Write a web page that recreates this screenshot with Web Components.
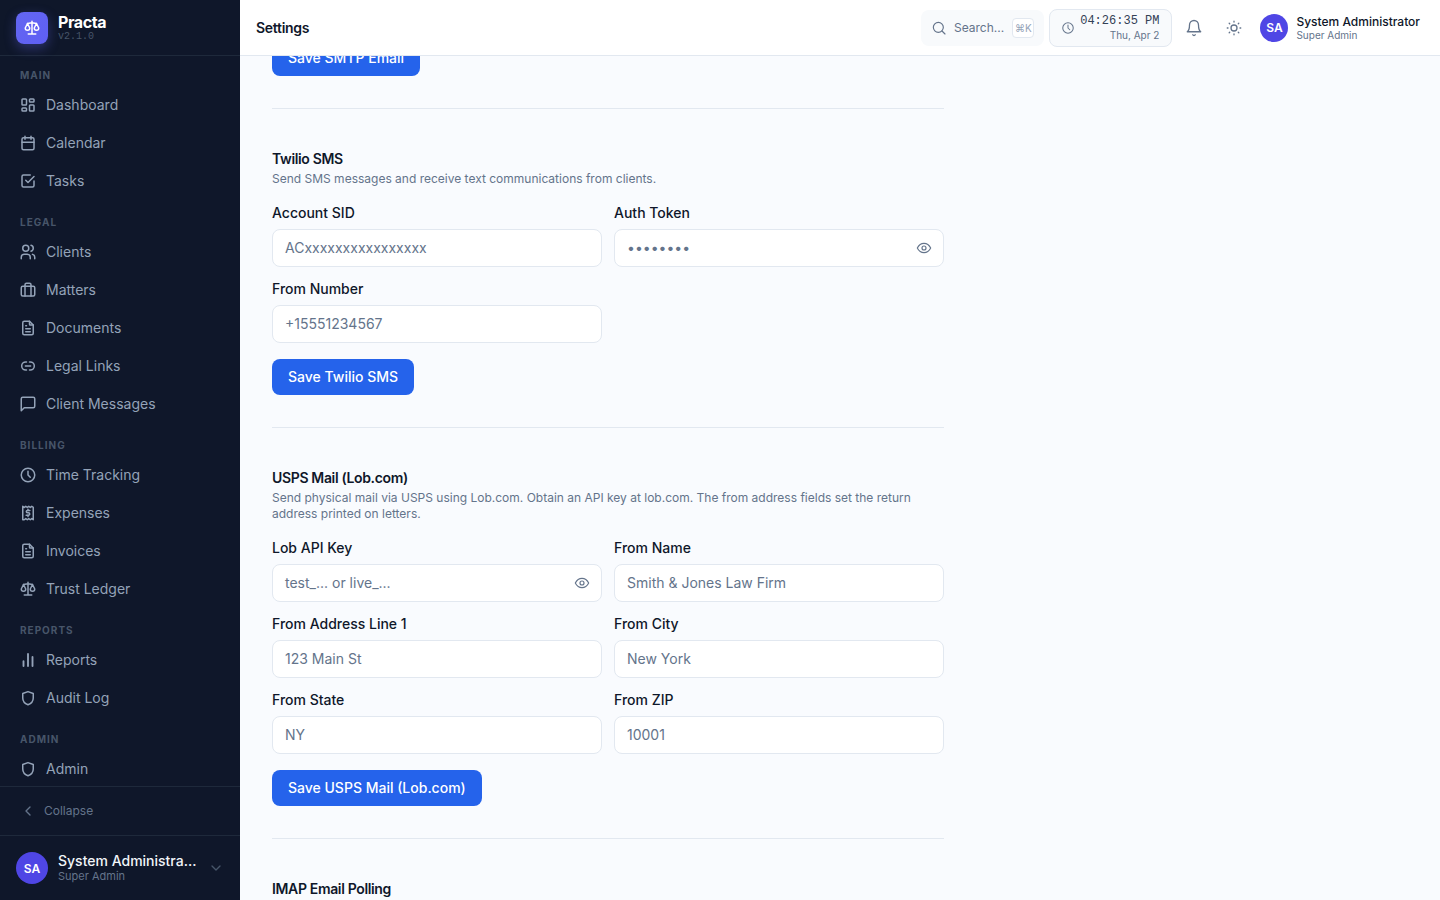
<!DOCTYPE html>
<html lang="en">
<head>
<meta charset="UTF-8" />
<title>Practa - Settings</title>
<style>
  html, body { margin: 0; height: 100%; overflow: hidden; }
  body { font-family: Inter, "Liberation Sans", sans-serif; background: #f8fafc; }
</style>
</head>
<body>

<template id="shell-tpl">
  <style>
    :host { display: flex; height: 100vh; width: 100%; }
    .col { flex: 1; min-width: 0; display: flex; flex-direction: column; }
    main { flex: 1; min-height: 0; overflow: hidden; background: #f9fbfe; padding-left: 32px; }
    .page { width: 672px; margin-top: -16px; }
  </style>
  <slot name="side"></slot>
  <div class="col">
    <slot name="top"></slot>
    <main><div class="page"><slot></slot></div></main>
  </div>
</template>

<template id="sidebar-tpl">
  <style>
    :host { display: flex; flex-direction: column; width: 240px; flex: none; height: 100vh; background: #0f172a; color: #94a3b8; }
    .brand { height: 55px; flex: none; display: flex; align-items: center; gap: 10px; padding: 0 16px; border-bottom: 1px solid #1e293b; }
    .logo { width: 32px; height: 32px; border-radius: 8px; background: linear-gradient(135deg, #6366f1, #5f5ff4); box-shadow: 0 4px 12px rgba(99,102,241,.35); display: flex; align-items: center; justify-content: center; color: #fff; }
    .name { color: #fff; font-size: 16px; font-weight: 700; line-height: 18px; letter-spacing: -0.4px; }
    .ver { color: #475569; font: 10px/10px "Liberation Mono", monospace; margin-top: 1px; }
    nav { flex: 1; min-height: 0; overflow: hidden; padding-top: 11px; display: flex; flex-direction: column; gap: 14px; }
    .collapse { height: 47px; padding-bottom: 1px; flex: none; display: flex; align-items: center; gap: 8px; padding-left: 20px; border-top: 1px solid #1e293b; font-size: 12px; color: #64748b; position: relative; z-index: 1; background: #0f172a; }
    .user { height: 64px; flex: none; display: flex; align-items: center; gap: 10px; padding: 0 16px; border-top: 1px solid #1e293b; }
    .av { width: 32px; height: 32px; border-radius: 50%; background: #4f46e5; color: #fff; font-size: 12px; font-weight: 600; display: flex; align-items: center; justify-content: center; flex: none; }
    .who { flex: 1; min-width: 0; padding-bottom: 2px; }
    .n { color: #f1f5f9; font-size: 14px; font-weight: 500; line-height: 17px; white-space: nowrap; overflow: hidden; text-overflow: ellipsis; }
    .r { color: #64748b; font-size: 11px; line-height: 14px; }
  </style>
  <div class="brand">
    <div class="logo"><app-icon name="scale" size="18" stroke="2"></app-icon></div>
    <div><div class="name">Practa</div><div class="ver">v2.1.0</div></div>
  </div>
  <nav><slot></slot></nav>
  <div class="collapse"><app-icon name="chev-left" size="16" stroke="2"></app-icon><span>Collapse</span></div>
  <div class="user">
    <div class="av">SA</div>
    <div class="who"><div class="n">System Administrator</div><div class="r">Super Admin</div></div>
    <app-icon name="chev-down" size="16" stroke="2" style="color:#475569"></app-icon>
  </div>
</template>

<template id="navsec-tpl">
  <style>
    :host { display: block; }
    .l { height: 16px; margin-bottom: 3px; padding-left: 20px; font-size: 10px; line-height: 16px; font-weight: 700; letter-spacing: 1px; color: #475569; text-transform: uppercase; }
  </style>
  <div class="l"></div>
  <slot></slot>
</template>

<template id="navitem-tpl">
  <style>
    :host { display: flex; align-items: center; box-sizing: border-box; height: 38px; padding: 0 0 1px 19px; gap: 9px; font-size: 14px; color: #94a3b8; }
  </style>
  <app-icon size="18" stroke="2"></app-icon><slot></slot>
</template>

<template id="topbar-tpl">
  <style>
    :host { display: flex; align-items: center; height: 55px; flex: none; background: #fff; border-bottom: 1px solid #e2e8f0; padding: 0 20px 0 16px; position: relative; z-index: 2; }
    h1 { margin: 0; font-size: 14px; font-weight: 600; color: #0f172a; flex: 1; letter-spacing: -0.3px; }
    .search { width: 123px; height: 36px; box-sizing: border-box; border-radius: 8px; background: #f8fafc; display: flex; align-items: center; padding: 0 10px 0 10px; gap: 6.5px; font-size: 12px; color: #64748b; }
    .search span { flex: 1; }
    kbd { font: 10px/18px Inter, sans-serif; width: 22px; height: 20px; box-sizing: border-box; border: 1px solid #e2e8f0; border-radius: 4px; background: #fff; text-align: center; color: #94a3b8; }
    .clock { margin-left: 5px; width: 123px; height: 38px; box-sizing: border-box; border: 1px solid #e2e8f0; border-radius: 8px; background: #f8fafc; display: flex; align-items: center; padding: 0 12px 0 11px; color: #64748b; }
    .t { margin-left: auto; text-align: right; }
    .t b { display: block; font: 12px/14px "Liberation Mono", monospace; color: #334155; }
    .t i { display: block; font: 10px/14px Inter, sans-serif; color: #64748b; }
    .btn { width: 40px; display: flex; justify-content: center; color: #64748b; }
    .bell { margin-left: 2px; }
    .av { margin-left: 6px; width: 28px; height: 28px; border-radius: 50%; background: #4f46e5; color: #fff; font-size: 12px; font-weight: 600; display: flex; align-items: center; justify-content: center; }
    .who { margin-left: 8px; }
    .n { font-size: 12px; font-weight: 500; line-height: 15px; color: #0f172a; white-space: nowrap; }
    .r { font-size: 10px; line-height: 13px; color: #64748b; }
  </style>
  <h1><slot></slot></h1>
  <div class="search"><app-icon name="search" size="16"></app-icon><span>Search...</span><kbd>⌘K</kbd></div>
  <div class="clock"><app-icon name="clock" size="14"></app-icon><div class="t"><b>04:26:35 PM</b><i>Thu, Apr 2</i></div></div>
  <div class="btn bell"><app-icon name="bell" size="18"></app-icon></div>
  <div class="btn"><app-icon name="sun" size="18"></app-icon></div>
  <div class="av">SA</div>
  <div class="who"><div class="n">System Administrator</div><div class="r">Super Admin</div></div>
</template>

<template id="section-tpl">
  <style>
    :host { display: block; padding: 40px 0 32px; border-bottom: 1px solid #e2e8f0; }
    :host([first]) { padding-top: 0; }
    h2 { margin: 0 0 2px; font-size: 14px; line-height: 20px; font-weight: 600; color: #0f172a; letter-spacing: -0.35px; }
    p { margin: 0 0 16px; font-size: 12px; line-height: 16px; color: #64748b; }
    .grid { display: grid; grid-template-columns: 1fr 1fr; gap: 12px; }
    .act { margin-top: 16px; }
  </style>
  <h2></h2>
  <p></p>
  <div class="grid"><slot></slot></div>
  <div class="act"><slot name="action"></slot></div>
</template>

<template id="field-tpl">
  <style>
    :host { display: block; min-width: 0; }
    label { display: block; font-size: 14px; line-height: 20px; font-weight: 500; color: #0f172a; margin-bottom: 6px; }
    .box { height: 38px; box-sizing: border-box; background: #fff; border: 1px solid #e2e8f0; border-radius: 8px; display: flex; align-items: center; padding: 0 11px 1px 12px; font-size: 14px; color: #64748b; }
    .box span { flex: 1; white-space: nowrap; }
    app-icon { color: #64748b; margin-top: 1px; }
  </style>
  <label></label>
  <div class="box"><span></span></div>
</template>

<template id="btn-tpl">
  <style>
    :host { display: inline-flex; align-items: center; box-sizing: border-box; height: 36px; padding: 0 16px 1px; background: #2563eb; color: #fff; border-radius: 8px; font-size: 14px; font-weight: 500; }
  </style>
  <slot></slot>
</template>

<app-shell>
  <app-sidebar slot="side">
    <nav-section label="Main">
      <nav-item icon="dashboard">Dashboard</nav-item>
      <nav-item icon="calendar">Calendar</nav-item>
      <nav-item icon="tasks">Tasks</nav-item>
    </nav-section>
    <nav-section label="Legal">
      <nav-item icon="users">Clients</nav-item>
      <nav-item icon="briefcase">Matters</nav-item>
      <nav-item icon="file">Documents</nav-item>
      <nav-item icon="link">Legal Links</nav-item>
      <nav-item icon="message">Client Messages</nav-item>
    </nav-section>
    <nav-section label="Billing">
      <nav-item icon="clock">Time Tracking</nav-item>
      <nav-item icon="receipt">Expenses</nav-item>
      <nav-item icon="file">Invoices</nav-item>
      <nav-item icon="scale">Trust Ledger</nav-item>
    </nav-section>
    <nav-section label="Reports">
      <nav-item icon="chart">Reports</nav-item>
      <nav-item icon="shield">Audit Log</nav-item>
    </nav-section>
    <nav-section label="Admin">
      <nav-item icon="shield">Admin</nav-item>
    </nav-section>
  </app-sidebar>

  <app-topbar slot="top">Settings</app-topbar>

  <settings-section first>
    <save-button slot="action">Save SMTP Email</save-button>
  </settings-section>

  <settings-section heading="Twilio SMS" desc="Send SMS messages and receive text communications from clients.">
    <form-field label="Account SID" hint="ACxxxxxxxxxxxxxxxx"></form-field>
    <form-field label="Auth Token" hint="••••••••" eye></form-field>
    <form-field label="From Number" hint="+15551234567"></form-field>
    <save-button slot="action">Save Twilio SMS</save-button>
  </settings-section>

  <settings-section heading="USPS Mail (Lob.com)" desc="Send physical mail via USPS using Lob.com. Obtain an API key at lob.com. The from address fields set the return address printed on letters.">
    <form-field label="Lob API Key" hint="test_... or live_..." eye></form-field>
    <form-field label="From Name" hint="Smith &amp; Jones Law Firm"></form-field>
    <form-field label="From Address Line 1" hint="123 Main St"></form-field>
    <form-field label="From City" hint="New York"></form-field>
    <form-field label="From State" hint="NY"></form-field>
    <form-field label="From ZIP" hint="10001"></form-field>
    <save-button slot="action">Save USPS Mail (Lob.com)</save-button>
  </settings-section>

  <settings-section heading="IMAP Email Polling"></settings-section>
</app-shell>

<script type="module">
  const ICONS = {
    dashboard: '<rect x="4" y="4" width="6" height="8" rx="1"/><rect x="4" y="16" width="6" height="4" rx="1"/><rect x="14" y="12" width="6" height="8" rx="1"/><rect x="14" y="4" width="6" height="4" rx="1"/>',
    calendar: '<rect x="4" y="5" width="16" height="16" rx="2"/><path d="M16 3v4M8 3v4M4 11h16"/>',
    tasks: '<path d="M9 11l3 3l8-8"/><path d="M20 12v6a2 2 0 0 1-2 2H6a2 2 0 0 1-2-2V6a2 2 0 0 1 2-2h9"/>',
    users: '<circle cx="9" cy="7" r="4"/><path d="M3 21v-2a4 4 0 0 1 4-4h4a4 4 0 0 1 4 4v2"/><path d="M16 3.13a4 4 0 0 1 0 7.75"/><path d="M21 21v-2a4 4 0 0 0-3-3.85"/>',
    briefcase: '<rect x="3" y="7" width="18" height="13" rx="2"/><path d="M8 7V5a2 2 0 0 1 2-2h4a2 2 0 0 1 2 2v2"/><path d="M8 7v13M16 7v13"/>',
    file: '<path d="M14 3v4a1 1 0 0 0 1 1h4"/><path d="M17 21H7a2 2 0 0 1-2-2V5a2 2 0 0 1 2-2h7l5 5v11a2 2 0 0 1-2 2z"/><path d="M9 9h1M9 13h6M9 17h6"/>',
    link: '<path d="M10 6.600H9a5.400 5.400 0 0 0 0 10.800h1"/><path d="M14 6.600h1a5.400 5.400 0 0 1 0 10.800h-1"/><path d="M8.500 12h7"/>',
    message: '<path d="M21 15a2 2 0 0 1-2 2H7l-4 4V5a2 2 0 0 1 2-2h14a2 2 0 0 1 2 2z"/>',
    clock: '<circle cx="12" cy="12" r="9"/><path d="M12 7v5l3 3"/>',
    receipt: '<path d="M5 21V3l2 1.500L9 3l2 1.500L13 3l2 1.500L17 3l2 1.500V21l-2-1.500L15 21l-2-1.500L11 21l-2-1.500L7 21z"/><path d="M14.500 8.500h-3.200a1.600 1.600 0 0 0 0 3.200h1.400a1.600 1.600 0 0 1 0 3.200H9.500"/><path d="M12 7v1.500M12 15v1.500"/>',
    scale: '<path d="M7 20h10M6 6l6-1l6 1M12 3v17"/><path d="M9 12l-3-6l-3 6a3 3 0 0 0 6 0"/><path d="M21 12l-3-6l-3 6a3 3 0 0 0 6 0"/>',
    chart: '<g stroke-width="2.500"><path d="M6 20v-6.500M12 20V4M18 20V8"/></g>',
    shield: '<path d="M12 3.500l7 2.500v6c0 4.500-3 7.500-7 9c-4-1.500-7-4.500-7-9V6z"/>',
    'chev-left': '<path d="M15 18l-6-6 6-6"/>',
    'chev-down': '<path d="M6 9l6 6 6-6"/>',
    search: '<circle cx="11" cy="11" r="7.500"/><path d="M21 21l-4.500-4.500"/>',
    bell: '<path d="M6 8a6 6 0 0 1 12 0c0 7 3 9 3 9H3s3-2 3-9"/><path d="M10.300 21a1.940 1.940 0 0 0 3.400 0"/>',
    sun: '<circle cx="12" cy="12" r="4"/><path d="M3 12h1M12 3v1M20 12h1M12 20v1M5.600 5.600l.7.7M18.400 5.600l-.7.7M17.700 17.700l.7.7M6.300 17.700l-.7.7"/>',
    eye: '<path d="M2 12s3.500-7 10-7 10 7 10 7-3.500 7-10 7-10-7-10-7z"/><circle cx="12" cy="12" r="3"/>'
  };

  class AppIcon extends HTMLElement {
    constructor() {
      super();
      this.attachShadow({ mode: "open" });
    }
    connectedCallback() { this.render(); }
    render() {
      const size = this.getAttribute("size") || 16;
      const stroke = this.getAttribute("stroke") || 1.75;
      this.shadowRoot.innerHTML = `<style>:host{display:inline-flex;flex:none}svg{display:block}</style>
        <svg xmlns="http://www.w3.org/2000/svg" width="${size}" height="${size}" viewBox="0 0 24 24" fill="none" stroke="currentColor" stroke-width="${stroke}" stroke-linecap="round" stroke-linejoin="round">${ICONS[this.getAttribute("name")] || ""}</svg>`;
    }
  }

  // shared base: clone a template into an open shadow root
  class Base extends HTMLElement {
    constructor(id) {
      super();
      this.attachShadow({ mode: "open" });
      this.shadowRoot.appendChild(document.getElementById(id).content.cloneNode(true));
    }
  }

  class AppShell extends Base { constructor() { super("shell-tpl"); } }
  class AppSidebar extends Base { constructor() { super("sidebar-tpl"); } }
  class AppTopbar extends Base { constructor() { super("topbar-tpl"); } }
  class SaveButton extends Base { constructor() { super("btn-tpl"); } }

  class NavSection extends Base {
    constructor() { super("navsec-tpl"); }
    connectedCallback() {
      this.shadowRoot.querySelector(".l").textContent = this.getAttribute("label");
    }
  }

  class NavItem extends Base {
    constructor() { super("navitem-tpl"); }
    connectedCallback() {
      const ic = this.shadowRoot.querySelector("app-icon");
      ic.setAttribute("name", this.getAttribute("icon"));
      if (ic.render) ic.render();
    }
  }

  class SettingsSection extends Base {
    constructor() { super("section-tpl"); }
    connectedCallback() {
      const h = this.shadowRoot.querySelector("h2");
      const p = this.shadowRoot.querySelector("p");
      if (this.hasAttribute("first")) {
        h.remove();
        p.remove();
        this.shadowRoot.querySelector(".grid").remove();
        this.shadowRoot.querySelector(".act").style.marginTop = 0;
      } else {
        h.textContent = this.getAttribute("heading");
        p.textContent = this.getAttribute("desc");
      }
    }
  }

  class FormField extends Base {
    constructor() { super("field-tpl"); }
    connectedCallback() {
      this.shadowRoot.querySelector("label").textContent = this.getAttribute("label");
      this.shadowRoot.querySelector(".box span").textContent = this.getAttribute("hint");
      if (this.hasAttribute("eye")) {
        const ic = document.createElement("app-icon");
        ic.setAttribute("name", "eye");
        ic.setAttribute("size", "16");
        this.shadowRoot.querySelector(".box").appendChild(ic);
      }
    }
  }

  customElements.define("app-icon", AppIcon);
  customElements.define("app-shell", AppShell);
  customElements.define("app-sidebar", AppSidebar);
  customElements.define("app-topbar", AppTopbar);
  customElements.define("save-button", SaveButton);
  customElements.define("nav-section", NavSection);
  customElements.define("nav-item", NavItem);
  customElements.define("settings-section", SettingsSection);
  customElements.define("form-field", FormField);
</script>
</body>
</html>
